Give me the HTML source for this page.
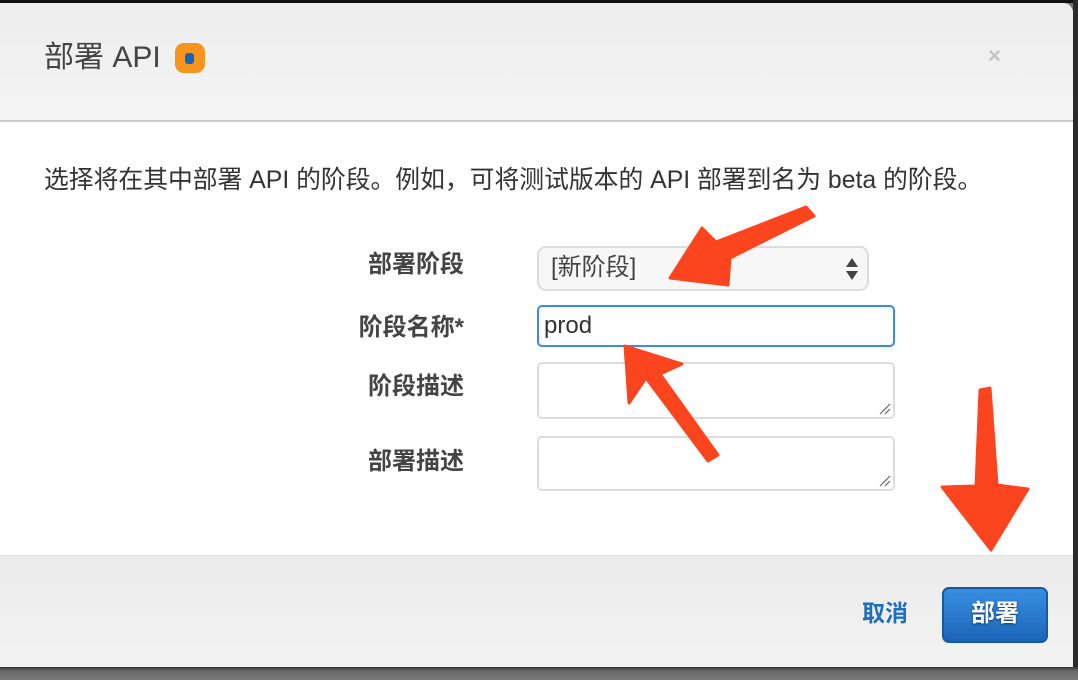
<!DOCTYPE html>
<html><head><meta charset="utf-8"><style>
*{margin:0;padding:0;box-sizing:border-box}
body{width:1078px;height:680px;overflow:hidden;background:#777;position:relative;font-family:"Liberation Sans","Noto Sans CJK SC",sans-serif}
.top{position:absolute;left:0;top:0;width:1078px;height:3px;background:#111}
.bot{position:absolute;left:0;top:667px;width:1078px;height:13px;background:linear-gradient(#333,#6a6a6a 30%,#7a7a7a)}
.rs{position:absolute;left:1073px;top:0;width:5px;height:680px;background:#2a2a2a}
.modal{position:absolute;left:0;top:3px;width:1073px;height:664px;background:#fff;border-top-right-radius:10px;overflow:hidden}
.hd{position:absolute;left:0;top:0;width:100%;height:119px;background:linear-gradient(#ededed,#f4f4f4);border-bottom:2px solid #ccc}
.ttl{position:absolute;left:44px;top:35px;font-size:30px;color:#444;line-height:40px}
.ic{position:absolute;left:175px;top:40px;width:30px;height:30px;background:#f7941d;border-radius:9px}
.ic i{position:absolute;left:10px;top:10px;width:9px;height:11px;background:#1565c0;border-radius:3px}
.x{position:absolute;left:988px;top:40px;font-size:22px;color:#c4c4c4;font-weight:bold}
.desc{position:absolute;left:44px;top:161px;font-size:24.8px;color:#333;white-space:nowrap;line-height:34px}
.lb{position:absolute;right:609px;font-size:24px;font-weight:bold;color:#444;white-space:nowrap;line-height:32px}
.sel{position:absolute;left:537px;top:243px;width:332px;height:45px;background:#f7f7f7;border:2px solid #ddd;border-radius:9px;font-size:24px;color:#444;padding:4px 12px;line-height:32px}
.inp{position:absolute;left:537px;top:302px;width:358px;height:42px;border:2px solid #3b8ede;border-radius:5px;font-size:24px;color:#333;padding:2px 5px;line-height:34px}
.ta{position:absolute;left:537px;width:358px;border:2px solid #ddd;border-radius:5px;background:#fff}
.ft{position:absolute;left:0;top:552px;width:100%;height:112px;background:linear-gradient(#ebebeb,#f3f3f3);border-top:1px solid #e2e2e2}
.cn{position:absolute;left:862px;top:594px;font-size:23px;font-weight:bold;color:#1f6fbf;line-height:32px}
.btn{position:absolute;left:942px;top:584px;width:106px;height:56px;border-radius:7px;background:linear-gradient(#3a8fe2,#1b65b8);border:2px solid #165aa3;color:#fff;font-size:24px;font-weight:bold;text-align:center;line-height:50px;text-shadow:0 1px 2px #0b3a70}
</style></head><body>
<div class="top"></div><div class="rs"></div><div class="bot"></div>
<div class="modal">
<div class="hd"><div class="ttl">部署 API</div><div class="ic"><i></i></div><div class="x">×</div></div>
<div class="desc">选择将在其中部署 API 的阶段。例如，可将测试版本的 API 部署到名为 beta 的阶段。</div>
<div class="lb" style="top:246px">部署阶段</div>
<div class="lb" style="top:309px">阶段名称*</div>
<div class="lb" style="top:368px">阶段描述</div>
<div class="lb" style="top:443px">部署描述</div>
<div class="sel">[新阶段]<svg style="position:absolute;right:8px;top:9px" width="14" height="24"><polygon points="7,1 13,10 1,10" fill="#444"/><polygon points="1,14 13,14 7,23" fill="#444"/></svg></div>
<div class="inp">prod</div>
<div class="ta" style="top:359px;height:57px"><svg style="position:absolute;right:2px;bottom:2px" width="12" height="12"><path d="M1 11L11 1M6 11L11 6" stroke="#666" stroke-width="1.2"/></svg></div>
<div class="ta" style="top:433px;height:55px"><svg style="position:absolute;right:2px;bottom:2px" width="12" height="12"><path d="M1 11L11 1M6 11L11 6" stroke="#666" stroke-width="1.2"/></svg></div>
<div class="ft"></div>
<div class="cn">取消</div>
<div class="btn">部署</div>
</div>
<svg style="position:absolute;left:0;top:0" width="1078" height="680">
<g fill="#fc441f" stroke="#fc441f" stroke-linejoin="round" stroke-width="3">
<polygon points="806,207 814,216 730,258 728,285 670,278 702,228 716,242"/>
<polygon points="718,455 708,461 646,378 629,403 625,346 682,364 660,374"/>
<polygon points="980,390 990,388 997,485 1028,489 991,550 942,487 976,486"/>
</g></svg>
</body></html>
